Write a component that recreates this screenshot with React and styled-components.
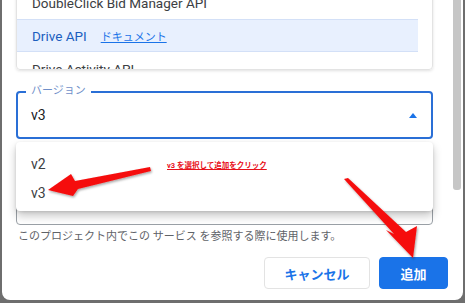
import React from "react";
import styled, { createGlobalStyle } from "styled-components";

const GlobalStyle = createGlobalStyle`
  html, body {
    margin: 0;
    padding: 0;
    background: #6e6e6e;
  }
  body {
    width: 465px;
    height: 303px;
    overflow: hidden;
    font-family: Roboto, "Noto Sans CJK JP", sans-serif;
  }
`;

const FONT = `Roboto, "Noto Sans CJK JP", sans-serif`;

const Dialog = styled.div`
  position: relative;
  margin-left: 2px;
  width: 461px;
  height: 300px;
  background: #fff;
  border-radius: 0 0 8px 8px;
  overflow: hidden;
  display: flex;
  flex-direction: column;
`;

const ScrollArea = styled.div`
  padding: 0 30px 0 14px;
  display: flex;
  flex-direction: column;
`;

const Scrollbar = styled.div`
  position: absolute;
  top: 0;
  right: 2px;
  width: 8px;
  height: 190px;
  background: #c6c6c6;
  border-radius: 0 0 3px 3px;
`;

const ApiList = styled.div`
  margin-top: -15px;
  height: 85px;
  box-sizing: border-box;
  border: 1px solid #e3e3e3;
  border-radius: 4px;
  box-shadow: 0 1px 3px rgba(0, 0, 0, 0.12);
  overflow: hidden;
  padding-right: 14px;
`;

const ApiRow = styled.div`
  height: 33px;
  box-sizing: border-box;
  display: flex;
  align-items: center;
  gap: 14px;
  padding-left: 15px;
  font-size: 13.5px;
  color: ${(p) => (p.$selected ? "#1c5fbf" : "#3c4043")};
  background: ${(p) => (p.$selected ? "#e8f0fe" : "transparent")};
  border-top: 1px solid ${(p) => (p.$selected ? "#d3e0f7" : "transparent")};
  border-bottom: 1px solid ${(p) => (p.$selected ? "#d3e0f7" : "transparent")};
`;

const DocLink = styled.a`
  font-size: 11px;
  color: #1a73e8;
  text-decoration: underline;
`;

const SelectWrap = styled.div`
  position: relative;
  margin-top: 21px;
`;

const SelectBox = styled.div`
  height: 48px;
  box-sizing: border-box;
  border: 2px solid #2a6fd6;
  border-radius: 4px;
  display: flex;
  align-items: center;
  justify-content: space-between;
  padding: 0 14px 0 13px;
  font-size: 14px;
  color: #202124;
`;

const FloatLabel = styled.span`
  position: absolute;
  top: -7px;
  left: 10px;
  padding: 0 5px;
  background: #fff;
  font-size: 11px;
  line-height: 13px;
  color: #6f8fc9;
`;

const Caret = styled.span`
  width: 0;
  height: 0;
  border-left: 4px solid transparent;
  border-right: 4px solid transparent;
  border-bottom: 5px solid #1a73e8;
`;

const Menu = styled.div`
  position: absolute;
  left: 0;
  right: 0;
  top: calc(100% + 3px);
  z-index: 2;
  background: #fff;
  border-radius: 4px;
  box-shadow: 0 5px 10px rgba(0, 0, 0, 0.22), 0 1px 3px rgba(0, 0, 0, 0.12);
  padding: 7px 0 4px;
`;

const MenuItem = styled.div`
  height: 29px;
  display: flex;
  align-items: center;
  padding-left: 15px;
  font-size: 14px;
  color: #3c4043;
`;

const TextField = styled.div`
  margin-top: 38px;
  height: 48px;
  box-sizing: border-box;
  border: 1px solid #9aa0a6;
  border-radius: 4px;
`;

const Helper = styled.p`
  margin: 5px 0 0 2px;
  font-size: 11px;
  line-height: 14px;
  color: #5f6368;
`;

const Actions = styled.div`
  display: flex;
  justify-content: flex-end;
  gap: 9px;
  padding: 13px 15px 11px;
`;

const Button = styled.button`
  height: 32px;
  box-sizing: border-box;
  border-radius: 4px;
  font-family: ${FONT};
  font-size: 13px;
  font-weight: 700;
  cursor: pointer;
  width: ${(p) => (p.$primary ? "69px" : "106px")};
  border: 1px solid ${(p) => (p.$primary ? "#1a73e8" : "#e3e3e3")};
  background: ${(p) => (p.$primary ? "#1a73e8" : "#fff")};
  color: ${(p) => (p.$primary ? "#fff" : "#1a73e8")};
`;

const Overlay = styled.div`
  position: absolute;
  left: -2px;
  top: 0;
  width: 465px;
  height: 303px;
  z-index: 5;
  pointer-events: none;
`;

const Note = styled.span`
  position: absolute;
  left: 167px;
  top: 160px;
  font-size: 7.5px;
  line-height: 11px;
  font-weight: 700;
  color: #e8101a;
  text-decoration: underline;
  white-space: nowrap;
`;

function Arrows() {
  return (
    <svg
      width="465"
      height="303"
      viewBox="0 0 465 303"
      style={{ position: "absolute", left: 0, top: 0 }}
    >
      <defs>
        <filter id="sh" x="-20%" y="-20%" width="140%" height="140%">
          <feDropShadow dx="1" dy="1.5" stdDeviation="1.2" floodColor="#000" floodOpacity="0.35" />
        </filter>
      </defs>
      <g fill="#f50d0d" filter="url(#sh)">
        <polygon points="48,190 71,174 75,181 150,167 151,171 78,189 73,196" />
        <polygon points="344,179 348,178 406,232 417,226 413,258 386,230 394,234" />
      </g>
    </svg>
  );
}

export default function App() {
  return (
    <>
      <GlobalStyle />
      <Dialog>
        <ScrollArea>
          <ApiList>
            <ApiRow>DoubleClick Bid Manager API</ApiRow>
            <ApiRow $selected>
              Drive API <DocLink>ドキュメント</DocLink>
            </ApiRow>
            <ApiRow>Drive Activity API</ApiRow>
          </ApiList>

          <SelectWrap>
            <FloatLabel>バージョン</FloatLabel>
            <SelectBox>
              <span>v3</span>
              <Caret />
            </SelectBox>
            <Menu>
              <MenuItem>v2</MenuItem>
              <MenuItem>v3</MenuItem>
            </Menu>
          </SelectWrap>

          <TextField />
          <Helper>このプロジェクト内でこの サービス を参照する際に使用します。</Helper>
        </ScrollArea>

        <Actions>
          <Button>キャンセル</Button>
          <Button $primary>追加</Button>
        </Actions>

        <Scrollbar />
        <Overlay>
          <Arrows />
          <Note>v3 を選択して追加をクリック</Note>
        </Overlay>
      </Dialog>
    </>
  );
}
